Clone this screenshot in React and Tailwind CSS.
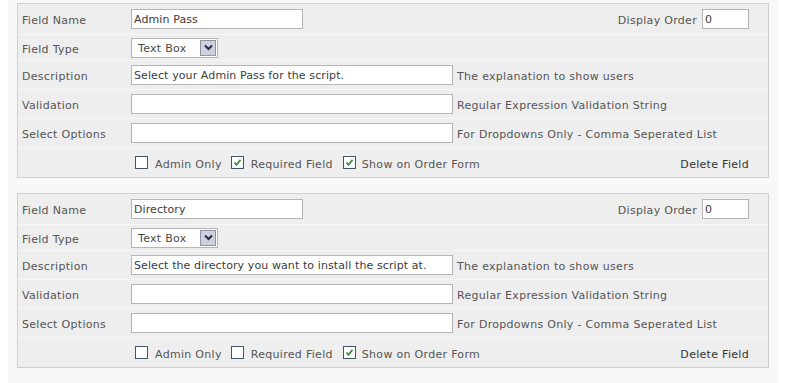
import React from "react";

const fields = [
    {
        name: "Admin Pass",
        description: "Select your Admin Pass for the script.",
        adminOnly: false,
        required: true,
        showOnOrder: true,
    },
    {
        name: "Directory",
        description: "Select the directory you want to install the script at.",
        adminOnly: false,
        required: false,
        showOnOrder: true,
    },
];

// -----------------------------
// Small pieces
// -----------------------------
const TextInput = ({ value, className }) => (
    <div className={`h-[20px] border border-[#b5b5b5] bg-white pl-[2px] pt-[1px] flex items-center text-[#3c3c3c] tracking-[0.1px] whitespace-nowrap ${className}`}>
        {value}
    </div>
);

const SelectBox = () => (
    <div className="h-[20px] w-[87px] border border-[#b5b5b5] bg-white flex items-center justify-between pl-[6px] pr-[1px]">
        <span className="text-[#4a4a4a] pt-[1px]">Text Box</span>
        <div className="w-[16px] h-[16px] border border-[#8f93a8] bg-[#cdd0de] flex items-center justify-center">
            <svg width="9" height="7" viewBox="0 0 9 7">
                <path d="M1 1.5 L4.5 5 L8 1.5" fill="none" stroke="#2b2b3a" strokeWidth="2" />
            </svg>
        </div>
    </div>
);

const CheckBox = ({ checked }) => (
    <div className="w-[13px] h-[13px] border border-[#3e5868] bg-white flex items-center justify-center">
        {checked && (
            <svg width="9" height="9" viewBox="0 0 9 9">
                <path d="M1.5 4.5 L3.5 6.8 L7.5 1.8" fill="none" stroke="#3a8a3a" strokeWidth="1.8" />
            </svg>
        )}
    </div>
);

const Note = ({ children }) => (
    <span className="ml-[4px] pt-[3px] text-[#555]">{children}</span>
);

// row heights follow the screenshot's uneven spacing
const Row = ({ label, children, h, last }) => (
    <div className={`${h} flex items-center ${last ? "" : "border-b border-[#f6f6f6]"}`}>
        <div className="w-[113px] pl-[4px] pt-[3px] shrink-0 text-[#555]">{label}</div>
        {children}
    </div>
);

const FieldPanel = ({ field }) => (
    <div className="w-[752px] border border-[#cfcfcf] bg-[#eeeeee]">
        <Row label="Field Name" h="h-[31px]">
            <TextInput value={field.name} className="w-[172px]" />
            <div className="flex-1" />
            <span className="text-[#555] mr-[5px] pt-[3px]">Display Order</span>
            <TextInput value="0" className="w-[47px] mr-[19px]" />
        </Row>
        <Row label="Field Type" h="h-[26px]">
            <SelectBox />
        </Row>
        <Row label="Description" h="h-[29px]">
            <TextInput value={field.description} className="w-[322px]" />
            <Note>The explanation to show users</Note>
        </Row>
        <Row label="Validation" h="h-[29px]">
            <TextInput value="" className="w-[322px]" />
            <Note>Regular Expression Validation String</Note>
        </Row>
        <Row label="Select Options" h="h-[29px]">
            <TextInput value="" className="w-[322px]" />
            <Note>For Dropdowns Only - Comma Seperated List</Note>
        </Row>
        <Row label="" h="h-[29px]" last>
            <div className="flex items-center pl-[4px] text-[#555]">
                <CheckBox checked={field.adminOnly} />
                <span className="ml-[7px] mr-[9px] pt-[3px]">Admin Only</span>
                <CheckBox checked={field.required} />
                <span className="ml-[7px] mr-[10px] pt-[3px]">Required Field</span>
                <CheckBox checked={field.showOnOrder} />
                <span className="ml-[6px] pt-[3px]">Show on Order Form</span>
            </div>
            <div className="flex-1" />
            <span className="text-[#333] mr-[19px] pt-[3px]">Delete Field</span>
        </Row>
    </div>
);

export default function App() {
    return (
        <div className="w-[792px] h-[383px] bg-white overflow-hidden text-[11px] leading-none tracking-[0.3px]" style={{ fontFamily: '"DejaVu Sans", Verdana, sans-serif' }}>
            <div className="ml-[8px] w-[770px] h-full bg-[#f8f8f8] pl-[9px] pt-[3px] flex flex-col gap-[15px]">
                {fields.map((f) => (
                    <FieldPanel key={f.name} field={f} />
                ))}
            </div>
        </div>
    );
}
